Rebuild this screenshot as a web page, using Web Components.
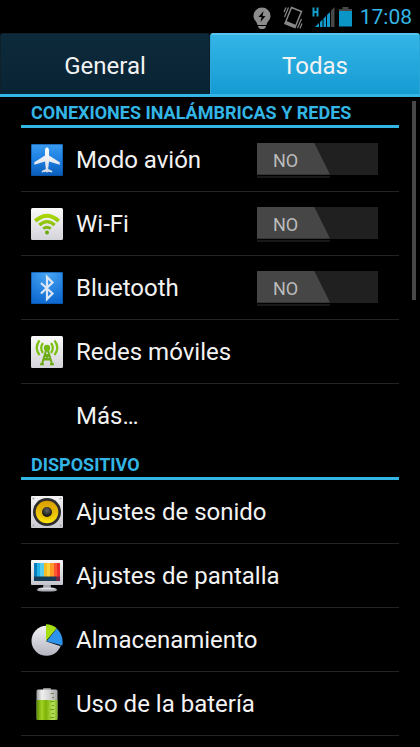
<!DOCTYPE html>
<html lang="es">
<head>
<meta charset="utf-8">
<meta name="viewport" content="width=device-width, initial-scale=1">
<title>Ajustes</title>
<style>
html, body { margin: 0; background: #000; }
body { font-family: Roboto, "Noto Sans", sans-serif; color: #f3f3f3; --accent: #33b5e5; }
</style>
</head>
<body>
<settings-app></settings-app>

<script>
const ICONS = {
  plane: `<defs><linearGradient id="a" x1="0" y1="0" x2="0" y2="1"><stop offset="0" stop-color="#3a9cf0"/><stop offset=".5" stop-color="#1c7ee0"/><stop offset="1" stop-color="#0a5cb8"/></linearGradient><linearGradient id="b" x1="0" y1="0" x2="0" y2="1"><stop offset="0" stop-color="#fff"/><stop offset="1" stop-color="#d4d9e6"/></linearGradient></defs>
    <rect width="32" height="32" rx="1.5" fill="url(#a)"/><path d="M.5 1.5Q.5.5 1.5.5h29q1 0 1 1v29q0 1-1 1h-29q-1 0-1-1z" fill="none" stroke="#0a4f9c" stroke-opacity=".6"/>
    <path d="M16 3.5c-1.500 0-2 1.800-2 3.300v4.700L3.300 18.300v2.400L14 17.600l.8 7.400-4 2v1.500l4-.7c.5.8 1.900.8 2.400 0l4 .7V27l-4-2 .8-7.400 10.700 3.100v-2.400L18 11.500V6.800c0-1.500-.5-3.300-2-3.300z" fill="url(#b)"/>`,
  wifi: `<defs><linearGradient id="a" x1="0" y1="0" x2="0" y2="1"><stop offset="0" stop-color="#fafafa"/><stop offset="1" stop-color="#d3d3da"/></linearGradient><linearGradient id="b" gradientUnits="userSpaceOnUse" x1="0" y1="5" x2="0" y2="27"><stop offset="0" stop-color="#b2dc08"/><stop offset="1" stop-color="#68a90d"/></linearGradient></defs>
    <rect width="32" height="32" rx="1.500" fill="url(#a)"/>
    <g fill="none" stroke="url(#b)"><path d="M4.300 13q11.700-10.500 23.400 0" stroke-width="3.800"/><path d="M8.300 17q7.700-6.800 15.400 0" stroke-width="3.200"/><path d="M12.200 20.700q3.800-3 7.600 0" stroke-width="2.800"/></g><circle cx="16" cy="24.500" r="2" fill="#68a90d"/>`,
  bluetooth: `<defs><radialGradient id="a" cx=".5" cy="0" r="1"><stop offset="0" stop-color="#4aa8f6"/><stop offset="1" stop-color="#0d68d0"/></radialGradient></defs>
    <rect width="32" height="32" rx="1.500" fill="url(#a)"/><path d="M.5 1.500Q.5.5 1.500.5h29q1 0 1 1v29q0 1-1 1h-29q-1 0-1-1z" fill="none" stroke="#0a4f9c" stroke-opacity=".6"/>
    <path d="M10 11L21.500 21.500 16 27V5l5.500 5.500L10 21.500" fill="none" stroke="#dce6f5" stroke-width="2.200"/>`,
  antenna: `<defs><linearGradient id="a" x1="0" y1="0" x2="0" y2="1"><stop offset="0" stop-color="#fafafa"/><stop offset="1" stop-color="#d3d3da"/></linearGradient></defs>
    <rect width="32" height="32" rx="1.500" fill="url(#a)"/>
    <g fill="none" stroke="#7cc010" stroke-width="2.200"><path d="M8.500 4.500q-5.500 7 0 14.500M23.500 4.500q5.500 7 0 14.500M12 7q-3.600 4.800 0 10M20 7q3.600 4.800 0 10"/></g>
    <g fill="none" stroke="#6cab16" stroke-width="2"><path d="M15.500 13L11 28M16.500 13l4.500 15M13.500 19h5M12 23.500h8M9 28.200h4M19 28.200h4M12.500 24l6-5M19.500 24l-6-5"/></g><circle cx="16" cy="12" r="3.200" fill="#74b812"/>`,
  speaker: `<defs><linearGradient id="a" x1="0" y1="0" x2="0" y2="1"><stop offset="0" stop-color="#f4f4f6"/><stop offset="1" stop-color="#c9c9d0"/></linearGradient><linearGradient id="b" x1="0" y1="0" x2="0" y2="1"><stop offset="0" stop-color="#d99c00"/><stop offset="1" stop-color="#fbe30a"/></linearGradient><radialGradient id="c" cx=".5" cy=".35" r=".6"><stop offset="0" stop-color="#666"/><stop offset="1" stop-color="#111"/></radialGradient></defs>
    <rect width="32" height="32" rx="1" fill="url(#a)"/><g fill="#a9a9af"><circle cx="2.500" cy="2.500" r="1.100"/><circle cx="29.500" cy="2.500" r="1.100"/><circle cx="2.500" cy="29.500" r="1.100"/><circle cx="29.500" cy="29.500" r="1.100"/></g>
    <circle cx="16" cy="16" r="14" fill="#2c2c2e"/><circle cx="16" cy="16" r="11.300" fill="url(#b)"/><circle cx="16" cy="16" r="7.500" fill="#d6a600" opacity=".3"/><circle cx="16" cy="16" r="5" fill="url(#c)"/>`,
  display: `<defs><linearGradient id="a" x1="0" y1="0" x2="0" y2="1"><stop offset="0" stop-color="#f7f7fa"/><stop offset="1" stop-color="#c4c4cd"/></linearGradient></defs>
    <path d="M12.500 24h7l.5 3.500q6 .5 6 2.500 0 1.500-10 1.500T6 30q0-2 6-2.500z" fill="#a9a9b3"/><path d="M7 29q2-1.500 9-1.500t9 1.500q-9 1-18 0z" fill="#dcdce2"/><rect y="0" width="32" height="25" rx="1" fill="url(#a)"/>
    <g><path fill="#087dbb" d="M3 3h3v18H3z"/><path fill="#20b3e9" d="M6 3h3v18H6z"/><path fill="#55cbed" d="M9 3h4v18H9z"/><path fill="#f3bd22" d="M13 3h3v18h-3z"/><path fill="#ffd13e" d="M16 3h3v18h-3z"/><path fill="#ff9a29" d="M19 3h4v18h-4z"/><path fill="#ff5535" d="M23 3h3v18h-3z"/><path fill="#e92c2c" d="M26 3h3v18h-3z"/><path fill="#153b56" d="M3 16.500h22V21H3z"/><path fill="#702746" d="M25 16.500h4V21h-4z"/></g>`,
  pie: `<defs><linearGradient id="a" x1="0" y1="0" x2="0" y2="1"><stop offset="0" stop-color="#f1f1f4"/><stop offset="1" stop-color="#b4b4c0"/></linearGradient></defs>
    <circle cx="15.500" cy="16.800" r="15" fill="url(#a)"/><path d="M15.500 17.500L29 22l4-4V0H15.500z" fill="#000"/><path d="M15 17V.2q6 0 10.800 4z" fill="#a5df13"/><path d="M15.500 17.200L25.800 4.400Q33 11 31.300 21.600z" fill="#2e93ea"/>`,
  battery: `<defs><linearGradient id="a"><stop offset="0" stop-color="#9a9a9a"/><stop offset=".25" stop-color="#f0f0f0"/><stop offset=".6" stop-color="#d6d6d6"/><stop offset="1" stop-color="#a6a6a6"/></linearGradient><linearGradient id="b"><stop offset="0" stop-color="#5a8a06"/><stop offset=".25" stop-color="#a3d422"/><stop offset=".45" stop-color="#7eb208"/><stop offset=".8" stop-color="#b7e356"/><stop offset="1" stop-color="#7cab22"/></linearGradient></defs>
    <rect x="12" y="0" width="8" height="3" rx="1" fill="#8d8d8d"/><rect x="5.500" y="1.500" width="21" height="30.500" rx="1.500" fill="url(#a)"/><path d="M5.500 12h21v18.500q0 1.500-1.500 1.500H7q-1.500 0-1.500-1.500z" fill="url(#b)"/><path d="M19.500 5.500h3.500M21 9.500h2M19.500 13.500h3.500M21 17.500h2M19.500 21.500h3.500M21 25.500h2M19.500 29.500h3.500" stroke="#486013" stroke-opacity=".6"/>`
};

function component(name, html, setup) {
  const template = document.createElement('template');
  template.innerHTML = html;
  customElements.define(name, class extends HTMLElement {
    constructor() {
      super();
      this.attachShadow({ mode: 'open' }).append(template.content.cloneNode(true));
    }
    connectedCallback() { if (setup) setup(this, this.shadowRoot); }
  });
}

component('settings-icon', `
<style>:host { display: block; width: 32px; height: 32px; flex: none; } svg { display: block; }</style>
<svg viewBox="0 0 32 32" width="32" height="32" aria-hidden="true"></svg>`,
(host, root) => { root.querySelector('svg').innerHTML = ICONS[host.getAttribute('name')] || ''; });

component('status-bar', `
<style>
:host { display: flex; align-items: center; justify-content: flex-end; height: 33px; flex: none; padding-right: 8px; }
svg { display: block; flex: none; }
.bulb { margin-right: 12px; } .shake { margin-right: 8px; } .signal { margin-right: 4px; } .cell { margin-right: 8px; }
time { font-size: 21px; line-height: 31px; padding-top: 2px; color: var(--accent); font-weight: 400; }
</style>
<svg class="bulb" width="18" height="24" viewBox="0 0 18 24" role="img" aria-label="Linterna"><path d="M9 2.500a8.500 8.500 0 0 0-8.500 8.500c0 4 2.800 4.500 4 9h9c1.200-4.500 4-5 4-9A8.500 8.500 0 0 0 9 2.500zM5 21h8v1L11 24H7l-2-2z" fill="#8c8c8c"/><path d="M10.500 6L5.500 12h3l-1 5 5-6h-3z" fill="#000"/></svg>
<svg class="shake" width="20" height="24" viewBox="0 0 20 24" role="img" aria-label="Vibración"><g fill="none" stroke="#888" stroke-width="1.500"><path d="M8.500 2.500L18.500 6.500 12 22.500 2 18.500z"/><path d="M2.500 17L12 21" stroke-width="2.500"/><path d="M5.500 2.500L1.500 12M3 2.500L1 7M14.500 23L18.500 14M17 23.500l2-5" stroke-width="1.200"/></g></svg>
<svg class="signal" width="24" height="24" viewBox="0 0 24 24" role="img" aria-label="Señal H"><path d="M2.500 2.500v9M6.500 2.500v9M2.500 7h4" stroke="#159bc8" stroke-width="2"/><g fill="#139bcf"><path d="M4 22l4-4v4zM9 17l2.500-2.500V22H9zM12.500 13.500L15 11v11h-2.500zM16 10l3-3v15h-3z"/><path d="M20 5.500L23.500 2v20H20z" fill="#484848"/></g></svg>
<svg class="cell" width="13" height="24" viewBox="0 0 13 24" role="img" aria-label="Batería"><path d="M3.500 2h6v2H13v4H0V4h3.500z" fill="#474747"/><path d="M0 6h13v15.500H0z" fill="#0b95c7"/></svg>
<time>17:08</time>`);

component('tab-button', `
<style>
:host { display: block; flex: 1; }
button { display: block; width: 100%; height: 61px; margin: 0; padding: 3px 0 0; border: 1px solid #10202b; border-bottom: 0; border-radius: 3px 3px 0 0; background: linear-gradient(#0d2a3b, #082334); font: 24px/56px Roboto, "Noto Sans", sans-serif; color: #f3f3f3; box-sizing: border-box; }
:host([selected]) button { border-color: #2aa6d8; border-top: 2px solid #58c4ee; padding-top: 2px; background: linear-gradient(#34b5e6, #159bd3); }
</style>
<button type="button" role="tab"><slot></slot></button>`,
(host, root) => root.querySelector('button').setAttribute('aria-selected', host.hasAttribute('selected')));

component('tab-strip', `
<style>:host { display: flex; flex: none; border-bottom: 3px solid var(--accent); }</style>
<slot></slot>`);

component('section-title', `
<style>
:host { display: block; border-bottom: 3px solid var(--accent); }
h2 { margin: 0; padding: 4px 10px 0; font-size: 18px; line-height: 25px; font-weight: 700; color: var(--accent); text-transform: uppercase; white-space: nowrap; }
</style>
<h2><slot></slot></h2>`);

component('toggle-switch', `
<style>
:host { display: block; width: 121px; padding-top: 1px; flex: none; }
.track { display: grid; align-items: start; }
input, .thumb { grid-area: 1 / 1; margin: 0; }
input { appearance: none; width: 121px; height: 32px; background: #202020; }
.thumb { width: 73px; height: 32px; padding-left: 16px; box-sizing: border-box; clip-path: polygon(0 0, 57px 0, 100% 100%, 0 100%); background: #464646; color: #bcbcbc; font-size: 18px; line-height: 35px; pointer-events: none; }
.base { width: 73px; height: 2px; margin-top: 1px; background: #181818; }
</style>
<div class="track"><input type="checkbox" role="switch" aria-label="Activar"><span class="thumb">NO</span></div><div class="base"></div>`,
(host, root) => root.querySelector('input').setAttribute('aria-label', host.getAttribute('label')));

component('setting-row', `
<style>
:host { display: flex; align-items: center; height: 64px; box-sizing: border-box; border-bottom: 1px solid #242424; padding-right: 21px; }
:host([last]) { border-bottom-color: transparent; }
button { display: flex; align-items: center; gap: 13px; flex: 1; min-width: 0; height: 63px; margin: 0; padding: 1px 0 0 10px; border: 0; background: none; color: inherit; font: 24px/32px Roboto, "Noto Sans", sans-serif; text-align: left; white-space: nowrap; }
</style>
<button type="button"><settings-icon></settings-icon><slot></slot></button><slot name="control"></slot>`,
(host, root) => {
  const icon = document.createElement('settings-icon');
  icon.setAttribute('name', host.getAttribute('icon') || '');
  root.querySelector('settings-icon').replaceWith(icon);
});

component('settings-app', `
<style>
:host { display: flex; flex-direction: column; height: 100vh; overflow: hidden; background: #000; }
main { position: relative; flex: 1; min-height: 0; overflow: hidden; padding: 0 21px; }
section-title:first-child { margin-top: -1px; }
.scroll { position: absolute; top: 4px; right: 4px; width: 4px; height: 199px; background: #484848; }
</style>
<status-bar></status-bar>
<tab-strip role="tablist"><tab-button>General</tab-button><tab-button selected>Todas</tab-button></tab-strip>
<main>
  <section-title>Conexiones inalámbricas y redes</section-title>
  <setting-row icon="plane">Modo avión<toggle-switch slot="control" label="Modo avión"></toggle-switch></setting-row>
  <setting-row icon="wifi">Wi-Fi<toggle-switch slot="control" label="Wi-Fi"></toggle-switch></setting-row>
  <setting-row icon="bluetooth">Bluetooth<toggle-switch slot="control" label="Bluetooth"></toggle-switch></setting-row>
  <setting-row icon="antenna">Redes móviles</setting-row>
  <setting-row last>Más…</setting-row>
  <section-title>Dispositivo</section-title>
  <setting-row icon="speaker">Ajustes de sonido</setting-row>
  <setting-row icon="display">Ajustes de pantalla</setting-row>
  <setting-row icon="pie">Almacenamiento</setting-row>
  <setting-row icon="battery">Uso de la batería</setting-row>
  <div class="scroll"></div>
</main>`);
</script>
</body>
</html>
